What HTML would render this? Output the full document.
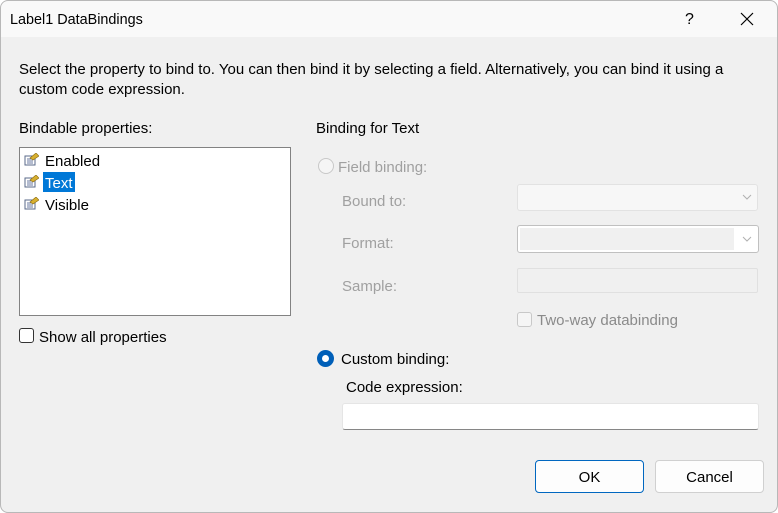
<!DOCTYPE html>
<html><head><style>
*{margin:0;padding:0;box-sizing:border-box}
body{width:778px;height:513px;background:#fff;font-family:"Liberation Sans",sans-serif;font-size:15px;color:#000;position:relative;overflow:hidden}
.win{position:absolute;left:0;top:0;width:778px;height:513px;background:#f0f0f0;border-radius:8px;overflow:hidden}
.frame{position:absolute;left:0;top:0;width:778px;height:513px;border:1px solid #b8b8b8;border-radius:8px}
.title{position:absolute;left:0;top:0;width:100%;height:37px;background:#f9f9f9}
.a{position:absolute;white-space:nowrap}
.t{position:absolute;white-space:nowrap;margin-top:2px}
.g{color:#a0a0a0}
.box{position:absolute;background:#fff;border:1px solid #828282}
.dis{position:absolute;background:#f7f7f7;border:1px solid #e2e2e2;border-radius:3px}
.btn{position:absolute;height:33px;border:1px solid #d0d0d0;border-radius:4px;background:#fdfdfd;text-align:center;line-height:33px}
.ic{position:absolute;width:15px;height:13px}
</style></head><body>
<div class="win">
<div class="title"></div>
<div class="t" style="left:10px;top:10px;font-size:14.4px">Label1 DataBindings</div>
<div class="t" style="left:685px;top:9px;font-size:16px">?</div>
<svg class="a" style="left:740px;top:12px" width="14" height="14"><path d="M1 1L13 13M13 1L1 13" stroke="#000" stroke-width="1.2"/></svg>

<div class="t" style="left:19px;top:58px;line-height:20px">Select the property to bind to. You can then bind it by selecting a field. Alternatively, you can bind it using a<br>custom code expression.</div>
<div class="t" style="left:19px;top:118px">Bindable properties:</div>
<div class="box" style="left:19px;top:147px;width:272px;height:169px"></div>
<svg class="ic" style="left:24px;top:153px"><rect x="1" y="3" width="10" height="9" fill="#fff" stroke="#5a6a8a"/><path d="M3 6h6M3 8h6M3 10h6" stroke="#6a7aa0"/><path d="M6 5L12 0L15 3L9 7Z" fill="#d8b030" stroke="#8a6a10" stroke-width=".6"/></svg>
<div class="t" style="left:45px;top:151px">Enabled</div>
<svg class="ic" style="left:24px;top:175px"><rect x="1" y="3" width="10" height="9" fill="#fff" stroke="#5a6a8a"/><path d="M3 6h6M3 8h6M3 10h6" stroke="#6a7aa0"/><path d="M6 5L12 0L15 3L9 7Z" fill="#d8b030" stroke="#8a6a10" stroke-width=".6"/></svg>
<div class="a" style="left:43px;top:172px;width:32px;height:20px;background:#0078d7"></div>
<div class="t" style="left:45px;top:173px;color:#fff">Text</div>
<svg class="ic" style="left:24px;top:197px"><rect x="1" y="3" width="10" height="9" fill="#fff" stroke="#5a6a8a"/><path d="M3 6h6M3 8h6M3 10h6" stroke="#6a7aa0"/><path d="M6 5L12 0L15 3L9 7Z" fill="#d8b030" stroke="#8a6a10" stroke-width=".6"/></svg>
<div class="t" style="left:45px;top:195px">Visible</div>
<div class="a" style="left:19px;top:328px;width:15px;height:15px;border:1px solid #333;border-radius:3px;background:#fff"></div>
<div class="t" style="left:39px;top:327px">Show all properties</div>

<div class="t" style="left:316px;top:118px">Binding for Text</div>
<div class="a" style="left:318px;top:158px;width:16px;height:16px;border:1px solid #c8c8c8;border-radius:50%;background:#f5f5f5"></div>
<div class="t g" style="left:338px;top:157px">Field binding:</div>
<div class="t g" style="left:342px;top:191px">Bound to:</div>
<div class="dis" style="left:517px;top:184px;width:241px;height:27px"></div>
<svg class="a" style="left:742px;top:194px" width="10" height="6"><path d="M1 1L5 5L9 1" stroke="#b0b0b0" fill="none"/></svg>
<div class="t g" style="left:342px;top:233px">Format:</div>
<div class="a" style="left:517px;top:225px;width:242px;height:28px;background:#fff;border:1px solid #c0c0c0;border-radius:3px"><div style="position:absolute;left:2px;top:2px;width:214px;height:22px;background:#f0f0f0"></div></div>
<svg class="a" style="left:742px;top:236px" width="10" height="6"><path d="M1 1L5 5L9 1" stroke="#b0b0b0" fill="none"/></svg>
<div class="t g" style="left:342px;top:276px">Sample:</div>
<div class="a" style="left:517px;top:268px;width:241px;height:25px;border:1px solid #e0e0e0;border-radius:2px"></div>
<div class="a" style="left:517px;top:312px;width:15px;height:15px;border:1px solid #c8c8c8;border-radius:3px;background:#f5f5f5"></div>
<div class="t g" style="left:537px;top:310px;color:#8a8a8a">Two-way databinding</div>
<div class="a" style="left:317px;top:350px;width:17px;height:17px;border-radius:50%;background:#005fb8"><div style="position:absolute;left:5px;top:5px;width:7px;height:7px;border-radius:50%;background:#fff"></div></div>
<div class="t" style="left:341px;top:349px">Custom binding:</div>
<div class="t" style="left:346px;top:377px">Code expression:</div>
<div class="a" style="left:342px;top:403px;width:417px;height:27px;background:#fff;border:1px solid #e5e5e5;border-bottom:1px solid #868686;border-radius:3px"></div>

<div class="btn" style="left:535px;top:460px;width:109px;border-color:#0067c0">OK</div>
<div class="btn" style="left:655px;top:460px;width:109px">Cancel</div>
</div>
<div class="frame"></div>
</body></html>
